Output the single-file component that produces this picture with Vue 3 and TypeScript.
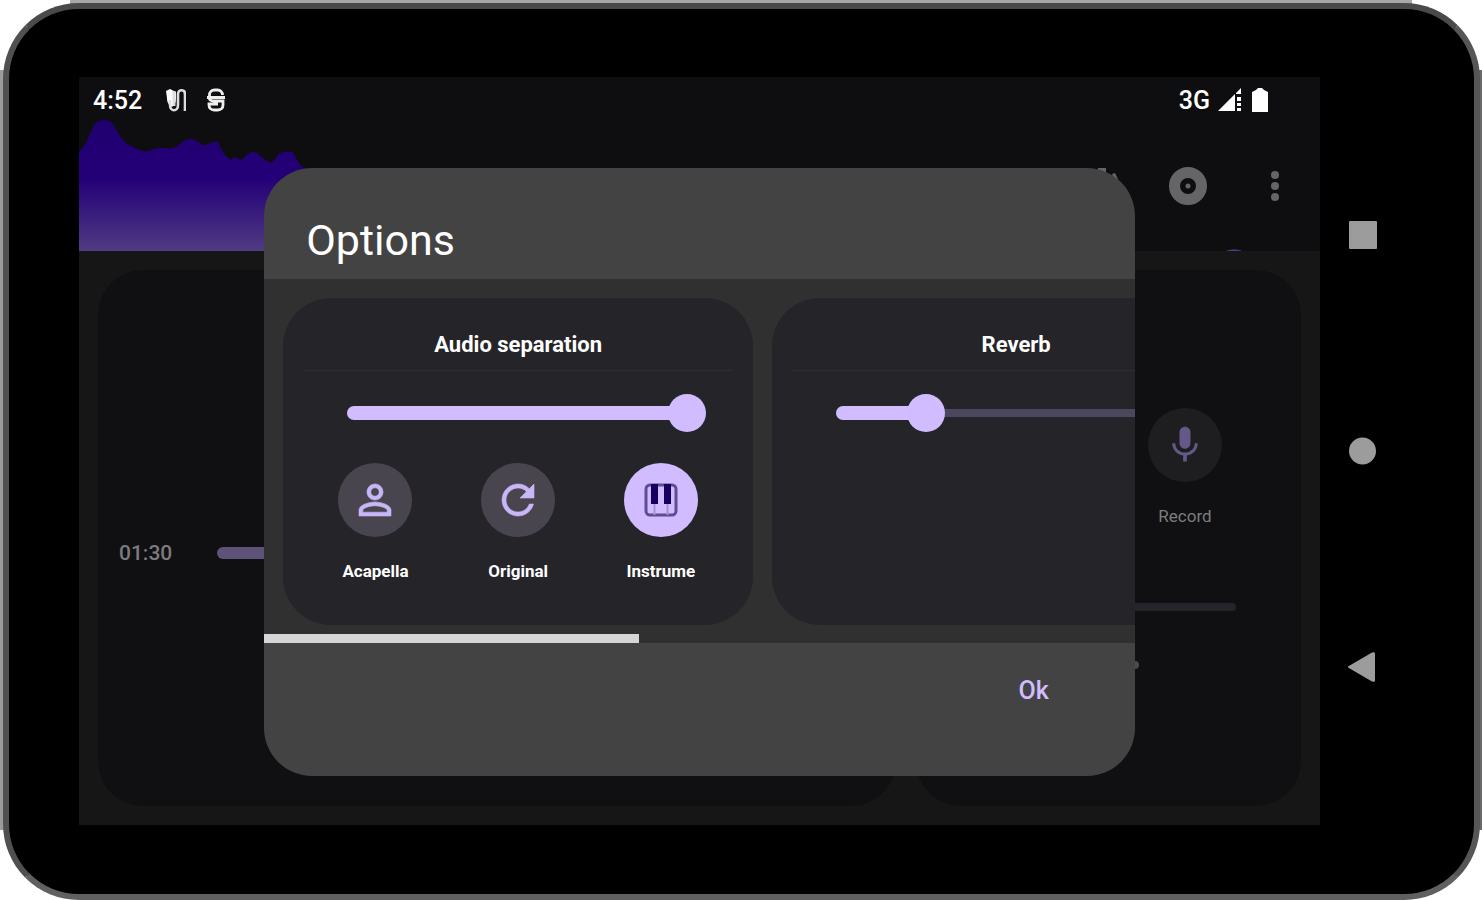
<script setup lang="ts">
import { reactive, ref } from 'vue'

type Mode = 'acapella' | 'original' | 'instrumental'

const modes: { id: Mode; label: string }[] = [
  { id: 'acapella', label: 'Acapella' },
  { id: 'original', label: 'Original' },
  { id: 'instrumental', label: 'Instrume' },
]
const mode = ref<Mode>('instrumental')
const levels = reactive({ separation: 100, reverb: 22, position: 45, volume: 0 })

const thumb = 38
const fillWidth = (value: number) => ({
  width: `calc(${thumb / 2}px + (100% - ${thumb}px) * ${value / 100})`,
})
</script>

<template>
  <div class="stage">
    <div class="device">
      <main class="screen">
        <header class="top">
          <div class="status">
            <span class="clock">4:52</span>
            <svg class="status-icon" viewBox="0 0 20 24" width="20" height="24" aria-hidden="true">
              <path d="M0 3l4-2 6 3v7c0 4-2 6-4 8-4-3-5-5-5-9z" fill="#fff" />
              <path d="M4 12v5c0 7 8 7 8 0V6c0-5 7-5 7 0v17" fill="none" stroke="#ddd" stroke-width="2.600" />
              <path d="M8 3v15" stroke="#ddd" stroke-width="3" />
            </svg>
            <svg class="status-icon" viewBox="0 0 20 24" width="20" height="24" aria-hidden="true">
              <path d="M3.500 9V7c0-3 2-5 5-5h3c3 0 5 2 5 5M1 9.500h18M3 9c0 3 2 4 5 4h9v4c0 3-2 5-5 5H8c-3 0-5-2-5-5v-1h9" fill="none" stroke="#eee" stroke-width="2.800" />
            </svg>
            <span class="network">3G</span>
            <svg viewBox="0 0 24 24" width="24" height="24" aria-hidden="true">
              <path d="M0 23L17 6v17zM18 5l5-5v6h-5zM19 9h4v4h-4zM19 15h4v3h-4zM19 20h4v3h-4z" fill="#fff" />
            </svg>
            <svg class="battery" viewBox="0 0 16 24" width="16" height="24" aria-hidden="true">
              <path d="M4 2l2-2h4l2 2 4 2v20H0V4z" fill="#fff" />
            </svg>
          </div>
          <div class="toolbar">
            <svg class="wave" viewBox="0 0 1241 131" preserveAspectRatio="none" aria-hidden="true">
              <defs>
                <linearGradient id="waveFill" x1="0" y1="0" x2="0" y2="1">
                  <stop offset="0" stop-color="#200070" />
                  <stop offset="0.45" stop-color="#240078" />
                  <stop offset="1" stop-color="#503b82" />
                </linearGradient>
              </defs>
              <path
                d="M0 32C8 24 9 18 14 7C17 1 21 0 25 0C31 0 34 3 38 11C43 20 47 24 54 27C61 30 64 32 70 31C77 28 78 28 84 28C94 29 96 28 101 24C108 18 112 18 118 21C122 24 125 27 129 24C133 22 137 21 139 22C142 31 146 36 152 40C156 36 158 38 162 40C167 38 168 32 175 32C181 33 184 40 190 42C198 44 196 32 206 32C214 31 214 32 217 38C221 46 225 50 234 49C244 46 246 47 260 58L420 100L560 131H1147C1151 129 1159 129 1163 131H0Z"
                fill="url(#waveFill)"
              />
            </svg>
            <div class="actions">
              <button type="button" aria-label="Effects">
                <svg viewBox="0 0 40 40" width="40" height="40">
                  <path d="M17 2h8v5h-8zM31 8l3-1 3 6-3 3zM4 30l16-16 4 4L8 34z" fill="#656467" />
                </svg>
              </button>
              <button type="button" aria-label="Disc">
                <svg viewBox="0 0 40 40" width="40" height="40">
                  <circle cx="20" cy="20" r="13.500" fill="none" stroke="#656467" stroke-width="11" />
                  <circle cx="20" cy="20" r="2.500" fill="#656467" />
                </svg>
              </button>
              <button type="button" aria-label="More">
                <svg viewBox="0 0 40 40" width="40" height="40">
                  <g fill="#656467">
                    <circle cx="20" cy="9" r="4" />
                    <circle cx="20" cy="20" r="4" />
                    <circle cx="20" cy="31" r="4" />
                  </g>
                </svg>
              </button>
            </div>
          </div>
        </header>

        <div class="panels">
          <section class="panel player">
            <label class="time" for="position">01:30</label>
            <div class="seek">
              <span class="seek-fill" :style="{ width: levels.position + '%' }"></span>
              <input id="position" v-model.number="levels.position" class="range bare" type="range" disabled />
            </div>
          </section>
          <section class="panel mixer">
            <button type="button" class="record">
              <span class="disc dim">
                <svg viewBox="0 0 24 24" width="44" height="44" aria-hidden="true">
                  <path fill="#635887" d="M12 14c1.66 0 2.99-1.34 2.99-3L15 5c0-1.66-1.34-3-3-3S9 3.34 9 5v6c0 1.66 1.34 3 3 3zm5.3-3c0 3-2.54 5.1-5.3 5.1S6.7 14 6.7 11H5c0 3.41 2.72 6.23 6 6.72V21h2v-3.28c3.28-.48 6-3.3 6-6.72h-1.7z" />
                </svg>
              </span>
              <span class="caption">Record</span>
            </button>
            <div class="volume">
              <input v-model.number="levels.volume" class="range bare" type="range" aria-label="Volume" disabled />
            </div>
            <span class="marker"></span>
          </section>
        </div>

        <div class="overlay">
          <div class="dialog" role="dialog" aria-labelledby="dialog-title">
            <h1 id="dialog-title">Options</h1>
            <div class="scroller">
              <section class="card">
                <h2><label for="separation">Audio separation</label></h2>
                <div class="slider">
                  <span class="track"></span>
                  <span class="fill" :style="fillWidth(levels.separation)"></span>
                  <input id="separation" v-model.number="levels.separation" class="range" type="range" min="0" max="100" />
                </div>
                <div class="modes">
                  <button
                    v-for="m in modes"
                    :key="m.id"
                    type="button"
                    class="mode"
                    :class="{ active: mode === m.id }"
                    :aria-pressed="mode === m.id"
                    @click="mode = m.id"
                  >
                    <span class="disc">
                      <svg v-if="m.id === 'acapella'" viewBox="0 0 24 24" width="48" height="48" aria-hidden="true">
                        <path fill="currentColor" stroke="currentColor" stroke-width="0.300" d="M12 5.9c1.16 0 2.1.94 2.1 2.1s-.94 2.1-2.1 2.1S9.9 9.16 9.9 8s.94-2.1 2.1-2.1m0 9c2.97 0 6.1 1.46 6.1 2.1v1.1H5.9V17c0-.64 3.13-2.1 6.1-2.1M12 4C9.79 4 8 5.79 8 8s1.79 4 4 4 4-1.79 4-4-1.79-4-4-4zm0 9c-2.67 0-8 1.34-8 4v3h16v-3c0-2.66-5.33-4-8-4z" />
                      </svg>
                      <svg v-else-if="m.id === 'original'" viewBox="0 0 24 24" width="48" height="48" aria-hidden="true">
                        <path fill="currentColor" stroke="currentColor" stroke-width="0.300" d="M17.65 6.35C16.2 4.9 14.21 4 12 4c-4.42 0-7.99 3.58-7.99 8s3.57 8 7.99 8c3.73 0 6.84-2.55 7.73-6h-2.08c-.82 2.33-3.04 4-5.65 4-3.31 0-6-2.69-6-6s2.69-6 6-6c1.66 0 3.14.69 4.22 1.78L13 11h7V4l-2.35 2.35z" />
                      </svg>
                      <svg v-else viewBox="0 0 34 34" width="34" height="34" aria-hidden="true">
                        <rect x="2" y="2" width="30" height="30" rx="4" fill="none" stroke="#5f4c92" stroke-width="3" />
                        <path d="M10.500 20v12M23.500 20v12" stroke="#a593d6" stroke-width="2" />
                        <path d="M7 1h7v20H7zM20 1h7v20h-7z" fill="#150060" />
                      </svg>
                    </span>
                    <span class="caption">{{ m.label }}</span>
                  </button>
                </div>
              </section>
              <section class="card wide">
                <h2><label for="reverb">Reverb</label></h2>
                <div class="slider">
                  <span class="track"></span>
                  <span class="fill" :style="fillWidth(levels.reverb)"></span>
                  <input id="reverb" v-model.number="levels.reverb" class="range" type="range" min="0" max="100" />
                </div>
              </section>
              <span class="scrollbar"></span>
            </div>
            <footer>
              <button type="button" class="ok">Ok</button>
            </footer>
          </div>
        </div>
      </main>

      <nav class="keys" aria-label="System">
        <button type="button" aria-label="Recent apps">
          <svg viewBox="0 0 30 30" width="30" height="30"><rect x="1" y="1" width="28" height="28" rx="1" fill="#9c9c9c" /></svg>
        </button>
        <button type="button" aria-label="Home">
          <svg viewBox="0 0 30 30" width="30" height="30"><circle cx="14.500" cy="15" r="13.500" fill="#9c9c9c" /></svg>
        </button>
        <button type="button" aria-label="Back">
          <svg viewBox="0 0 30 30" width="30" height="30"><path d="M-1 15L24 0.500q3-1 3 1v27q0 2-3 1z" fill="#9c9c9c" /></svg>
        </button>
      </nav>
    </div>
  </div>
</template>

<style>
body {
  margin: 0;
  background: #fff;
}
</style>

<style scoped>
* {
  box-sizing: border-box;
}
.stage {
  display: flex;
  min-height: 100vh;
  padding: 3px 2px 0 3px;
  background:
    linear-gradient(#a8a8a8, #a8a8a8) center top / calc(100% - 140px) 4px no-repeat,
    linear-gradient(#9c9c9c, #9c9c9c) left center / 4px calc(100% - 140px) no-repeat,
    linear-gradient(#6a6a6a, #6a6a6a) right center / 3px calc(100% - 140px) no-repeat;
}
.device {
  display: flex;
  flex: 1;
  min-width: 0;
  padding: 68px 68px 69px 70px;
  border: 6px solid;
  border-color: #4a4a4a #565656 #606060 #505050;
  border-radius: 76px;
  background: #000;
  font-family: Roboto, "Noto Sans", sans-serif;
  color: #fff;
}
button {
  margin: 0;
  padding: 0;
  border: 0;
  background: none;
  color: inherit;
  font: inherit;
  cursor: pointer;
}
svg {
  display: block;
}
.screen {
  position: relative;
  display: flex;
  flex: 1;
  flex-direction: column;
  min-width: 0;
  background: #161616;
}
.keys {
  display: flex;
  flex-direction: column;
  justify-content: space-around;
  align-items: center;
  width: 86px;
  padding: 50px 0;
}

/* status bar and toolbar */
.top {
  background: #0e0e10;
}
.status {
  display: flex;
  align-items: center;
  height: 43px;
  padding: 3px 52px 0 14px;
  font-size: 25px;
  font-weight: 500;
}
.clock {
  margin-right: 24px;
}
.status-icon {
  margin-right: 20px;
}
.network {
  margin-right: 8px;
  margin-left: auto;
}
.battery {
  margin-left: 10px;
}
.toolbar {
  position: relative;
  height: 131px;
}
.wave {
  position: absolute;
  inset: 0;
  width: 100%;
  height: 100%;
}
.actions {
  position: relative;
  display: flex;
  justify-content: flex-end;
  gap: 47px;
  padding: 46px 25px 0;
}

/* background panels */
.panels {
  display: flex;
  flex: 1;
  gap: 20px;
  padding: 19px;
}
.panel {
  border-radius: 45px;
  background: #101012;
}
.player {
  display: flex;
  flex: 1;
  align-items: center;
  gap: 45px;
  padding: 30px 21px 0;
}
.time {
  font-size: 21px;
  font-weight: 500;
  color: #7c7c7e;
}
.seek {
  position: relative;
  flex: 1;
  height: 12px;
}
.seek-fill {
  position: absolute;
  inset: 0 auto 0 0;
  border-radius: 6px;
  background: #5e5279;
}
.mixer {
  display: flex;
  flex: 0 0 32%;
  flex-direction: column;
  padding: 138px 65px 0;
}
.record {
  display: flex;
  flex-direction: column;
  align-items: center;
  align-self: flex-end;
  gap: 22px;
  width: 102px;
}
.record .caption {
  font-weight: 400;
  color: #7c7c7e;
}
.volume {
  position: relative;
  height: 8px;
  margin-top: 75px;
  border-radius: 4px;
  background: #25242b;
}
.marker {
  align-self: center;
  width: 60px;
  height: 8px;
  margin-top: 50px;
  border-radius: 4px;
  background: #4a4a4c;
}

/* dialog */
.overlay {
  position: absolute;
  inset: 42px 0 0;
  display: flex;
  justify-content: center;
  align-items: center;
}
.dialog {
  width: calc(70% + 2px);
  overflow: hidden;
  border-radius: 48px;
  background: #434343;
}
h1 {
  margin: 0;
  padding: 42px 42px 9px;
  font-size: 43px;
  font-weight: 400;
  line-height: 60px;
}
.scroller {
  position: relative;
  display: flex;
  gap: 19px;
  height: 364px;
  padding: 19px 19px 18px;
  overflow: hidden;
  background: #303030;
}
.card {
  flex: 0 0 470px;
  padding: 22px 21px 0;
  border-radius: 48px;
  background: #252429;
}
.card.wide {
  flex-basis: 488px;
}
h2 {
  margin: 0;
  border-bottom: 1px solid #2e2d33;
  font-size: 22px;
  font-weight: 700;
  line-height: 50px;
  text-align: center;
}
.slider {
  position: relative;
  height: 38px;
  margin: 23px 26px 31px 43px;
}
.wide .slider {
  margin-right: 44px;
}
.track,
.fill {
  position: absolute;
  left: 0;
}
.track {
  top: 15px;
  width: 100%;
  height: 8px;
  border-radius: 4px;
  background: #4d475d;
}
.fill {
  top: 12px;
  height: 14px;
  border-radius: 7px;
  background: #d0bcff;
}
.range {
  position: absolute;
  inset: 0;
  width: 100%;
  height: 100%;
  margin: 0;
  background: none;
  appearance: none;
}
.range::-webkit-slider-thumb {
  width: 38px;
  height: 38px;
  border-radius: 50%;
  background: #d0bcff;
  appearance: none;
}
.bare {
  opacity: 0;
}
.modes {
  display: grid;
  grid-template-columns: repeat(3, 1fr);
}
.mode {
  display: flex;
  flex-direction: column;
  align-items: center;
  gap: 22px;
}
.disc {
  display: flex;
  justify-content: center;
  align-items: center;
  width: 74px;
  height: 74px;
  border-radius: 50%;
  background: #48454e;
  color: #c9b6f6;
}
.disc.dim {
  background: #1e1d20;
}
.active .disc {
  background: #d0bcff;
}
.caption {
  font-size: 17px;
  font-weight: 700;
  line-height: 24px;
}
.scrollbar {
  position: absolute;
  bottom: 0;
  left: 0;
  width: 43%;
  height: 9px;
  background: #d6d6d6;
}
footer {
  display: flex;
  justify-content: flex-end;
  height: 133px;
  padding: 22px 70px 0;
}
.ok {
  height: 50px;
  padding: 0 16px;
  font-size: 25px;
  font-weight: 500;
  color: #d0bcff;
}
</style>
